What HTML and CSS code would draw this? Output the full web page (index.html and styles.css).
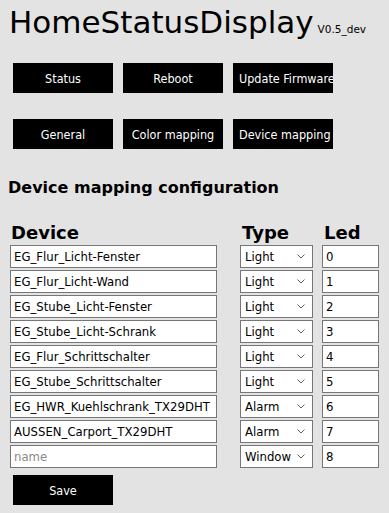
FILE: index.html
```html
<!DOCTYPE html>
<html lang="en">
<head>
    <meta charset="UTF-8">
    <meta name="viewport" content="width=device-width, initial-scale=1.0">
    <title>HomeStatusDisplay</title>
    <link rel="stylesheet" href="styles.css">
</head>
<body>
    <h1 class="title">HomeStatusDisplay<span class="version">V0.5_dev</span></h1>

    <div class="btn-row">
        <button>Status</button>
        <button>Reboot</button>
        <button>Update Firmware</button>
    </div>
    <div class="btn-row">
        <button>General</button>
        <button>Color mapping</button>
        <button>Device mapping</button>
    </div>

    <h3 class="section">Device mapping configuration</h3>

    <form class="mapping">
        <div class="map-row map-head">
            <span class="col-device">Device</span>
            <span class="col-type">Type</span>
            <span class="col-led">Led</span>
        </div>
        <div class="map-row">
            <input class="col-device" type="text" value="EG_Flur_Licht-Fenster">
            <select class="col-type"><option selected>Light</option><option>Alarm</option><option>Window</option></select>
            <input class="col-led" type="text" value="0">
        </div>
        <div class="map-row">
            <input class="col-device" type="text" value="EG_Flur_Licht-Wand">
            <select class="col-type"><option selected>Light</option><option>Alarm</option><option>Window</option></select>
            <input class="col-led" type="text" value="1">
        </div>
        <div class="map-row">
            <input class="col-device" type="text" value="EG_Stube_Licht-Fenster">
            <select class="col-type"><option selected>Light</option><option>Alarm</option><option>Window</option></select>
            <input class="col-led" type="text" value="2">
        </div>
        <div class="map-row">
            <input class="col-device" type="text" value="EG_Stube_Licht-Schrank">
            <select class="col-type"><option selected>Light</option><option>Alarm</option><option>Window</option></select>
            <input class="col-led" type="text" value="3">
        </div>
        <div class="map-row">
            <input class="col-device" type="text" value="EG_Flur_Schrittschalter">
            <select class="col-type"><option selected>Light</option><option>Alarm</option><option>Window</option></select>
            <input class="col-led" type="text" value="4">
        </div>
        <div class="map-row">
            <input class="col-device" type="text" value="EG_Stube_Schrittschalter">
            <select class="col-type"><option selected>Light</option><option>Alarm</option><option>Window</option></select>
            <input class="col-led" type="text" value="5">
        </div>
        <div class="map-row">
            <input class="col-device" type="text" value="EG_HWR_Kuehlschrank_TX29DHT">
            <select class="col-type"><option>Light</option><option selected>Alarm</option><option>Window</option></select>
            <input class="col-led" type="text" value="6">
        </div>
        <div class="map-row">
            <input class="col-device" type="text" value="AUSSEN_Carport_TX29DHT">
            <select class="col-type"><option>Light</option><option selected>Alarm</option><option>Window</option></select>
            <input class="col-led" type="text" value="7">
        </div>
        <div class="map-row">
            <input class="col-device" type="text" placeholder="name">
            <select class="col-type"><option>Light</option><option>Alarm</option><option selected>Window</option></select>
            <input class="col-led" type="text" value="8">
        </div>
        <button type="button" class="save">Save</button>
    </form>
</body>
</html>
```

FILE: styles.css
```css
body {
    margin: 0;
    padding: 0 8px;
    background-color: #e3e3e3;
    font-family: 'DejaVu Sans', Verdana, sans-serif;
    color: #000;
}
.title {
    margin: 0 0 0 1px;
    font-size: 31px;
    font-weight: normal;
    line-height: 44px;
}
.version {
    font-size: 10.5px;
    line-height: 0;
    margin-left: 4px;
}
.btn-row {
    display: flex;
    gap: 10px;
    margin-left: 5px;
}
.btn-row:first-of-type {
    margin-top: 19px;
}
.btn-row + .btn-row {
    margin-top: 26px;
}
button {
    width: 100px;
    height: 30px;
    padding: 0 6px;
    background-color: #000;
    color: #fff;
    border: none;
    font-family: 'DejaVu Sans Condensed', 'DejaVu Sans', sans-serif;
    font-stretch: condensed;
    font-size: 12.5px;
    white-space: nowrap;
    overflow: hidden;
    text-align: center;
}
.section {
    margin: 28px 0 0 0;
    font-size: 16px;
    line-height: 22px;
}
.mapping {
    margin-top: 23px;
}
.map-row {
    display: flex;
    align-items: center;
    height: 25px;
    margin-left: 2px;
}
.map-head {
    height: 22px;
    align-items: flex-end;
    font-weight: bold;
    font-size: 18px;
    line-height: 22px;
}
.map-head span {
    padding-left: 1px;
}
.map-head .col-led {
    padding-left: 0;
}
.col-device {
    width: 207px;
}
.col-type {
    width: 73px;
    margin-left: 23px;
}
.col-led {
    width: 57px;
    margin-left: 9px;
}
input, select {
    box-sizing: border-box;
    height: 23px;
    border: 1px solid #767676;
    background-color: #fff;
    font-family: 'DejaVu Sans Condensed', 'DejaVu Sans', sans-serif;
    font-stretch: condensed;
    font-size: 13px;
    padding: 0 3px;
    margin-top: 0;
    margin-bottom: 0;
    color: #000;
    border-radius: 0;
}
select {
    appearance: none;
    -webkit-appearance: none;
    padding-left: 4px;
    background-image: url("data:image/svg+xml,%3Csvg xmlns='http://www.w3.org/2000/svg' width='8' height='5' viewBox='0 0 8 5'%3E%3Cpath d='M0.5 0.5 L4 4 L7.5 0.5' fill='none' stroke='%23606060' stroke-width='1'/%3E%3C/svg%3E");
    background-repeat: no-repeat;
    background-position: right 7px center;
}
input::placeholder {
    color: #8a8a8a;
}
.save {
    display: block;
    margin: 6px 0 0 5px;
}
```
